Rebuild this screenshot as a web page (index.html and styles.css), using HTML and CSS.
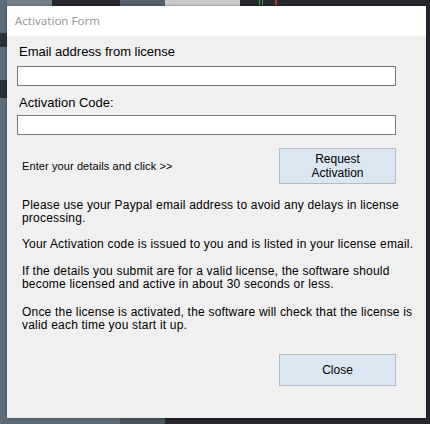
FILE: index.html
```html
<!DOCTYPE html>
<html>
<head>
<meta charset="utf-8">
<link rel="stylesheet" href="styles.css">
</head>
<body>
<div class="desktop">
  <div class="bg bg-top-a"></div>
  <div class="bg bg-top-b"></div>
  <div class="bg bg-top-c"></div>
  <div class="bg bg-left"></div>
  <div class="bg cell cell-1"></div>
  <div class="bg cell cell-2"></div>
  <div class="bg bg-bottom-a"></div>
  <div class="bg bg-bottom-b"></div>
  <div class="candle c1"></div>
  <div class="candle c2"></div>
  <div class="candle c3"></div>

  <div class="window">
    <div class="titlebar">Activation Form</div>
    <div class="content">
      <label class="field-label">Email address from license</label>
      <div class="textbox"></div>
      <label class="field-label second">Activation Code:</label>
      <div class="textbox tight"></div>
      <div class="request-row">
        <span class="hint">Enter your details and click &gt;&gt;</span>
        <button class="btn request">Request<br>Activation</button>
      </div>
      <div class="info">
        <p class="p1">Please use your Paypal email address to avoid any delays in license processing.</p>
        <p class="p2">Your Activation code is issued to you and is listed in your license email.</p>
        <p class="p3">If the details you submit are for a valid license, the software should become licensed and active in about 30 seconds or less.</p>
        <p class="p4">Once the license is activated, the software will check that the license is valid each time you start it up.</p>
      </div>
      <div class="footer">
        <button class="btn close">Close</button>
      </div>
    </div>
  </div>
</div>
</body>
</html>
```

FILE: styles.css
```css
html, body {
  margin: 0;
  padding: 0;
}
body {
  width: 430px;
  height: 424px;
  overflow: hidden;
  background: #26282d;
}
.desktop {
  position: relative;
  width: 430px;
  height: 424px;
}
.bg {
  position: absolute;
}
.bg-top-a { left: 0; top: 0; width: 52px; height: 6px; background: #737f8b; }
.bg-top-b { left: 120px; top: 0; width: 45px; height: 6px; background: #55606b; }
.bg-top-c { left: 165px; top: 0; width: 75px; height: 6px; background: #c9cacc; }
.bg-left { left: 0; top: 0; width: 7px; height: 424px; background: #5d6c79; }
.cell { left: 0; width: 7px; background: #2c3139; }
.cell-1 { top: 33px; height: 14px; }
.cell-2 { top: 80px; height: 18px; }
.bg-bottom-a { left: 0; top: 418px; width: 120px; height: 6px; background: #5d6c79; }
.bg-bottom-b { left: 120px; top: 418px; width: 45px; height: 6px; background: #4a5560; }
.candle { position: absolute; top: 0; width: 1px; height: 5px; }
.c1 { left: 259px; background: #3fae4a; }
.c2 { left: 262px; background: #3fae4a; }
.c3 { left: 275px; width: 2px; background: #c0302c; }

.window {
  position: absolute;
  left: 7px;
  top: 6px;
  width: 419px;
  height: 412px;
  background: #f0f0f0;
  display: flex;
  flex-direction: column;
  box-shadow: 0 0 3px rgba(0,0,0,0.35);
}
.titlebar {
  height: 30px;
  flex: none;
  background: #ffffff;
  color: #9a9a9a;
  font-family: "Noto Sans", "Open Sans", sans-serif;
  font-size: 11.5px;
  line-height: 30px;
  padding-left: 8px;
  box-sizing: border-box;
}
.content {
  flex: 1;
  display: flex;
  flex-direction: column;
  padding: 8px 30px 32px 10px;
  font-family: "Liberation Sans", Arial, sans-serif;
  color: #000;
}
.field-label {
  display: block;
  font-size: 13px;
  line-height: 15px;
  margin-left: 2px;
}
.field-label.second {
  margin-top: 9px;
}
.textbox {
  height: 20px;
  box-sizing: border-box;
  border: 1px solid #7a7a7a;
  background: #ffffff;
  margin-top: 7px;
}
.textbox.tight {
  margin-top: 5px;
}
.request-row {
  margin-top: 13px;
  display: flex;
  align-items: center;
  justify-content: space-between;
}
.hint {
  font-size: 11px;
  line-height: 13px;
  margin-left: 5px;
  letter-spacing: 0.1px;
}
.btn {
  box-sizing: border-box;
  width: 117px;
  background: #dbe6f3;
  border: 1px solid #b3bcc6;
  font-family: "Liberation Sans", Arial, sans-serif;
  font-size: 12px;
  color: #000;
  padding: 0;
  margin: 0;
}
.request {
  height: 36px;
  line-height: 14px;
}
.info {
  margin-top: 15px;
  margin-left: 5px;
  margin-right: -22px;
  font-size: 12px;
  line-height: 13px;
  letter-spacing: 0.2px;
}
.info p {
  margin: 0;
}
.info .p2 { margin-top: 13px; }
.info .p3 { margin-top: 14px; }
.info .p4 { margin-top: 15px; }
.footer {
  margin-top: auto;
  display: flex;
  justify-content: flex-end;
}
.close {
  height: 32px;
  font-size: 12px;
}
```
